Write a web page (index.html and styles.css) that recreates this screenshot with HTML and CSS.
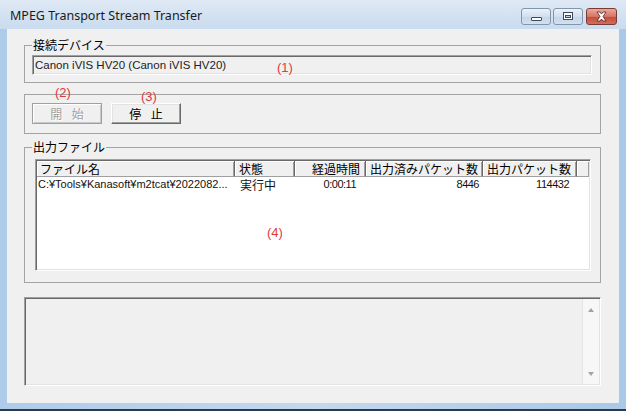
FILE: index.html
```html
<!DOCTYPE html>
<html lang="ja">
<head>
    <meta charset="UTF-8">
    <title>MPEG Transport Stream Transfer</title>
    <link rel="stylesheet" href="styles.css">
</head>
<body>
    <div class="window">
        <div class="titlebar">
            <span class="title">MPEG Transport Stream Transfer</span>
            <div class="caption">
                <span class="cap cap-min">
                    <svg width="30" height="17" viewBox="0 0 30 17"><rect x="10.5" y="9.5" width="10" height="3" rx="0.5" fill="#fff" stroke="#3b4a5e"/></svg>
                </span>
                <span class="cap cap-max">
                    <svg width="30" height="17" viewBox="0 0 30 17"><rect x="10.5" y="4.5" width="9" height="7" fill="#fff" stroke="#3b4a5e"/><rect x="12.5" y="7.5" width="5" height="2" fill="#c9d6e5" stroke="#3b4a5e"/></svg>
                </span>
                <span class="cap cap-close">
                    <svg width="31" height="17" viewBox="0 0 31 17"><path d="M11 4h3l1.5 2 1.5-2h3l-3 4.5 3 4.5h-3l-1.5-2-1.5 2h-3l3-4.5z" fill="#fff" stroke="#5a2020" stroke-width="0.8" stroke-linejoin="round"/></svg>
                </span>
            </div>
        </div>

        <div class="client">
            <fieldset class="group group-device">
                <legend>接続デバイス</legend>
                <div class="edit">Canon iVIS HV20 (Canon iVIS HV20)</div>
            </fieldset>

            <div class="group group-buttons">
                <button class="btn" disabled>開 始</button>
                <button class="btn">停 止</button>
            </div>

            <fieldset class="group group-output">
                <legend>出力ファイル</legend>
                <div class="listview">
                    <div class="lv-header">
                        <div class="hd">ファイル名</div>
                        <div class="hd">状態</div>
                        <div class="hd num">経過時間</div>
                        <div class="hd num">出力済みパケット数</div>
                        <div class="hd num">出力パケット数</div>
                        <div class="hd hd-fill"></div>
                    </div>
                    <div class="lv-row">
                        <div class="cell">C:¥Tools¥Kanasoft¥m2tcat¥2022082...</div>
                        <div class="cell cjk">実行中</div>
                        <div class="cell num col-time">0:00:11</div>
                        <div class="cell num col-done">8446</div>
                        <div class="cell num">114432</div>
                        <div class="cell"></div>
                    </div>
                </div>
            </fieldset>

            <div class="log">
                <div class="log-text"></div>
                <div class="scrollbar">
                    <span class="arrow arrow-up"></span>
                    <span class="arrow arrow-down"></span>
                </div>
            </div>
        </div>

        <!-- 注記 -->
        <span class="note note-1">(1)</span>
        <span class="note note-2">(2)</span>
        <span class="note note-3">(3)</span>
        <span class="note note-4">(4)</span>
    </div>
</body>
</html>
```

FILE: styles.css
```css
body,html{
    margin: 0;
    padding: 0;
}
body{
    font-family: "Liberation Sans", "Noto Sans CJK JP", sans-serif;
    font-size: 12px;
    color: #000;
}
.window{
    position: relative;
    width: 626px;
    height: 411px;
    box-sizing: border-box;
    display: flex;
    flex-direction: column;
    background: linear-gradient(90deg, #aecbea, #c3d8ee 50%, #aac8e8);
    border-bottom: 2px solid #2a3a4c;
}
.titlebar{
    height: 29px;
    flex: none;
    display: flex;
    align-items: flex-start;
    background: linear-gradient(#dfe9f5, #c9dbee);
}
.title{
    margin: 8px 0 0 10px;
    font-family: "Noto Sans", "DejaVu Sans", sans-serif;
    font-size: 12.5px;
    line-height: 16px;
    color: #1a1a1a;
}
.caption{
    margin-left: auto;
    margin-right: 9px;
    margin-top: 8px;
    display: flex;
    gap: 2px;
}
.cap{
    display: block;
    height: 17px;
    box-sizing: border-box;
    border: 1px solid #8494ab;
    border-radius: 3px;
    background: linear-gradient(#eaf1f9, #d2dfee 50%, #c3d4e7 51%, #d3e1f0);
    overflow: hidden;
}
.cap svg{
    display: block;
    margin: -1px;
}
.cap-min,.cap-max{
    width: 30px;
}
.cap-close{
    width: 31px;
    margin-left: 1px;
    border-color: #7a3b33;
    background: linear-gradient(#e9a99b, #d67564 50%, #c44a3a 51%, #d06e5b);
}
.client{
    flex: none;
    height: 374px;
    margin: 0 7px;
    padding: 0 18px 0 17px;
    background: #f0f0f0;
    display: flex;
    flex-direction: column;
}
.group{
    margin: 0;
    min-width: 0;
    border: 1px solid #a4a4a4;
}
.group legend{
    padding: 0 1px;
    font-size: 12px;
    line-height: 14px;
    font-family: "Noto Sans CJK JP", sans-serif;
}
.group-device{
    margin-top: 9px;
    padding: 3px 8px 7px 7px;
}
.edit{
    height: 20px;
    box-sizing: border-box;
    border: 1px solid;
    border-color: #a0a0a0 #fff #fff #a0a0a0;
    box-shadow: inset 1px 1px #696969, inset -1px -1px #e3e3e3;
    padding: 0 0 0 2px;
    font-size: 11.5px;
    line-height: 18px;
    color: #222;
    background: #f0f0f0;
}
.group-buttons{
    margin-top: 11px;
    padding: 8px 0 9px 7px;
    display: flex;
    gap: 9px;
}
.btn{
    width: 70px;
    height: 21px;
    margin: 0;
    padding: 0;
    font-family: "Noto Sans CJK JP", sans-serif;
    font-size: 12px;
    line-height: 17px;
    word-spacing: 7px;
    color: #000;
    background: #f0f0f0;
    border: 1px solid;
    border-color: #fff #696969 #696969 #fff;
    box-shadow: inset -1px -1px #a0a0a0, inset 1px 1px #e3e3e3;
}
.btn:disabled{
    color: #a0a0a0;
    text-shadow: 1px 1px #fff;
    border-color: #a0a0a0;
    box-shadow: inset 1px 1px #fff, inset -1px -1px #c8c8c8;
}
.group-output{
    margin-top: 6px;
    padding: 5px 9px 11px 10px;
}
.group-output legend{
    margin-left: -3px;
}
.listview{
    height: 112px;
    box-sizing: border-box;
    border: 1px solid;
    border-color: #a0a0a0 #fff #fff #a0a0a0;
    box-shadow: inset 1px 1px #696969, inset -1px -1px #e3e3e3;
    background: #fff;
    padding: 1px;
}
.lv-header,.lv-row{
    display: grid;
    grid-template-columns: 198px 60px 71px 117px 94px 1fr;
}
.lv-header{
    height: 16px;
}
.hd{
    box-sizing: border-box;
    padding: 0 4px 0 4px;
    font-family: "Noto Sans CJK JP", sans-serif;
    font-size: 12px;
    line-height: 15px;
    background: #f0f0f0;
    border-right: 1px solid #696969;
    border-bottom: 1px solid #a0a0a0;
    box-shadow: inset 1px 1px #fff, inset -1px 0 #a0a0a0;
    white-space: nowrap;
    overflow: hidden;
}
.hd:first-child{
    padding-left: 3px;
}
.hd.num{
    text-align: right;
    padding-right: 5px;
}
.hd-fill{
    border-right: none;
}
.lv-row{
    height: 15px;
}
.cell{
    padding: 0 3px 0 1px;
    font-size: 11px;
    line-height: 15px;
    color: #111;
    white-space: nowrap;
    overflow: hidden;
}
.cell.cjk{
    font-family: "Noto Sans CJK JP", sans-serif;
    font-size: 12px;
    padding-left: 5px;
}
.cell.num{
    text-align: right;
    letter-spacing: -0.5px;
    padding-right: 8px;
}
.cell.col-time{
    padding-right: 10px;
}
.cell.col-done{
    padding-right: 4px;
}
.log{
    margin-top: 14px;
    height: 89px;
    box-sizing: border-box;
    display: flex;
    border: 1px solid;
    border-color: #a0a0a0 #fff #fff #a0a0a0;
    box-shadow: inset 1px 1px #696969, inset -1px -1px #e3e3e3;
    padding: 1px;
}
.log-text{
    flex: 1;
}
.scrollbar{
    width: 16px;
    display: flex;
    flex-direction: column;
    justify-content: space-between;
    align-items: center;
    padding: 9px 0 8px;
    background: #f7f7f7;
    border-left: 1px solid #e4e4e4;
}
.arrow{
    width: 0;
    height: 0;
    border-left: 3.5px solid transparent;
    border-right: 3.5px solid transparent;
}
.arrow-up{
    border-bottom: 4px solid #a3a3a3;
}
.arrow-down{
    border-top: 4px solid #a3a3a3;
}
.note{
    position: absolute;
    color: #e23a3a;
    font-size: 13px;
    line-height: 14px;
}
.note-1{ left: 277px; top: 61px; }
.note-2{ left: 55px; top: 86px; }
.note-3{ left: 141px; top: 90px; }
.note-4{ left: 267px; top: 226px; }
```
